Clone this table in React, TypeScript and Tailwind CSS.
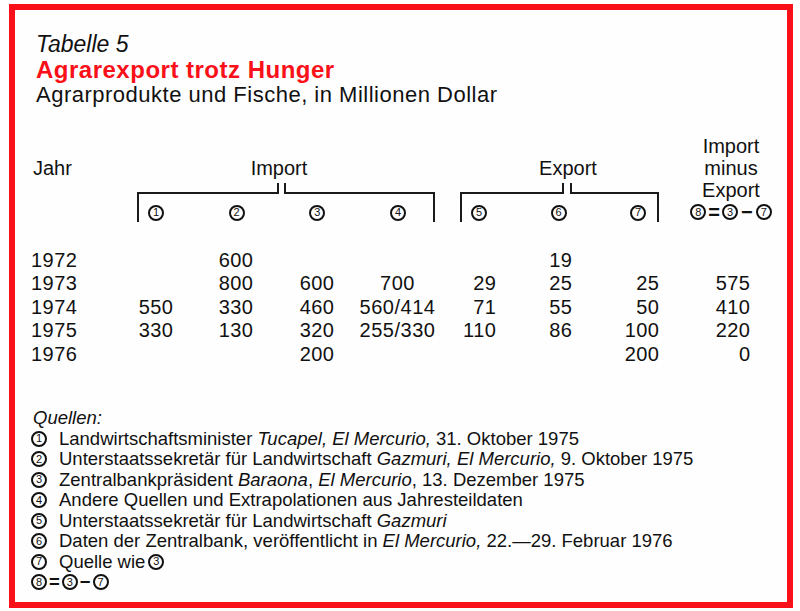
import React from 'react'

const INK = 'text-[#111]'

function Circ({ n, className = '' }: { n: number; className?: string }) {
  return (
    <span
      className={`inline-flex h-[16px] w-[16px] shrink-0 items-center justify-center rounded-full border-2 border-[#111] text-[11px] leading-none font-normal not-italic tracking-normal ${className}`}
    >
      {n}
    </span>
  )
}

type GroupProps = {
  label: string
  labelPad: string
  leftW: string
  rightW: string
  gap: string
  pad: string
  nums: number[]
}

function Group({ label, labelPad, leftW, rightW, gap, pad, nums }: GroupProps) {
  return (
    <div className="flex flex-col pt-[22px]">
      <div className={`text-center text-[20px] leading-[22px] ${labelPad}`}>{label}</div>
      {/* Klammer mit Kerbe in der Mitte */}
      <div className={`mt-[3.5px] flex h-[11px] ${gap}`}>
        <div className={`h-full border-b-2 border-r-2 border-[#1a1a1a] ${leftW}`} />
        <div className={`h-full border-b-2 border-l-2 border-[#1a1a1a] ${rightW}`} />
      </div>
      <div className={`flex h-[28px] justify-between border-x-2 border-[#1a1a1a] pt-[11px] ${pad}`}>
        {nums.map(n => (
          <Circ key={n} n={n} />
        ))}
      </div>
    </div>
  )
}

const ROWS = [
  ['1972', '', '600', '', '', '', '19', '', ''],
  ['1973', '', '800', '600', '700', '29', '25', '25', '575'],
  ['1974', '550', '330', '460', '560/414', '71', '55', '50', '410'],
  ['1975', '330', '130', '320', '255/330', '110', '86', '100', '220'],
  ['1976', '', '', '200', '', '', '', '200', '0'],
]

function cellAlign(i: number) {
  if (i === 0) return 'text-left'
  if (i === 4) return 'text-center'
  return 'text-right'
}

const NOTES: React.ReactNode[] = [
  <>
    Landwirtschaftsminister <i>Tucapel, El Mercurio,</i> 31. Oktober 1975
  </>,
  <>
    Unterstaatssekretär für Landwirtschaft <i>Gazmuri, El Mercurio,</i> 9. Oktober 1975
  </>,
  <>
    Zentralbankpräsident <i>Baraona</i>, <i>El Mercurio</i>, 13. Dezember 1975
  </>,
  <>Andere Quellen und Extrapolationen aus Jahresteildaten</>,
  <>
    Unterstaatssekretär für Landwirtschaft <i>Gazmuri</i>
  </>,
  <>
    Daten der Zentralbank, veröffentlicht in <i>El Mercurio,</i> 22.—29. Februar 1976
  </>,
  <span className="inline-flex items-center">
    Quelle wie
    <Circ n={3} className="ml-[3px]" />
  </span>,
]

export default function App() {
  return (
    <div className={`min-h-screen bg-white pl-[9px] pt-[4px] font-['Liberation_Sans',Arial,sans-serif] ${INK}`}>
      <div className="h-[604px] w-[784px] border-[6px] border-[#fa1018] bg-[#fefefe] pl-[16px] pt-[21.4px]">
        {/* Titel */}
        <div className="ml-[5px]">
          <div className="text-[23px] italic leading-[26px]">Tabelle 5</div>
          <div className="text-[24px] font-bold leading-[26px] tracking-[0.5px] text-[#fa1018]">
            Agrarexport trotz Hunger
          </div>
          <div className="text-[22px] leading-[24px] tracking-[0.5px]">
            Agrarprodukte und Fische, in Millionen Dollar
          </div>
        </div>

        {/* Tabellenkopf */}
        <div className="mt-[28px] flex items-start">
          <div className="w-[106px] pl-[2px] pt-[22px] text-[20px] leading-[22px]">Jahr</div>
          <div className="w-[298px]">
            <Group
              label="Import"
              labelPad="pr-[14px]"
              leftW="w-[142px]"
              rightW="w-[151px]"
              gap="gap-[5px]"
              pad="pl-[9px] pr-[27px]"
              nums={[1, 2, 3, 4]}
            />
          </div>
          <div className="ml-[25px] w-[199px]">
            <Group
              label="Export"
              labelPad="pl-[17px]"
              leftW="w-[104px]"
              rightW="w-[89px]"
              gap="gap-[6px]"
              pad="pl-[9px] pr-[11px]"
              nums={[5, 6, 7]}
            />
          </div>
          <div className="ml-[16px] w-[112px] text-center text-[20px] leading-[22px]">
            <div>Import</div>
            <div>minus</div>
            <div>Export</div>
            <div className="flex h-[22px] items-center justify-center">
              <Circ n={8} />
              <span className="mx-[2px] font-bold">=</span>
              <Circ n={3} />
              <span className="mx-[3px] font-bold">−</span>
              <Circ n={7} />
            </div>
          </div>
        </div>

        {/* Werte */}
        <div className="mt-[25.6px]">
          {ROWS.map(row => (
            <div
              key={row[0]}
              className="grid grid-cols-[69px_73.5px_80px_81px_126px_36px_76px_87px_91px] text-[20px] leading-[23.5px] tracking-[0.5px] whitespace-nowrap"
            >
              {row.map((v, i) => (
                <div key={i} className={cellAlign(i)}>
                  {v}
                </div>
              ))}
            </div>
          ))}
        </div>

        {/* Quellen */}
        <div className="mt-[41.7px] text-[18.5px] leading-[20.5px]">
          <div className="ml-[2px] italic">Quellen:</div>
          {NOTES.map((note, i) => (
            <div key={i} className="flex h-[20.5px] items-center whitespace-nowrap">
              <Circ n={i + 1} />
              <span className="ml-[12px]">{note}</span>
            </div>
          ))}
          <div className="flex h-[20.5px] items-center">
            <Circ n={8} />
            <span className="mx-[2px] font-bold">=</span>
            <Circ n={3} />
            <span className="mx-[2px] font-bold">−</span>
            <Circ n={7} />
          </div>
        </div>
      </div>
    </div>
  )
}
